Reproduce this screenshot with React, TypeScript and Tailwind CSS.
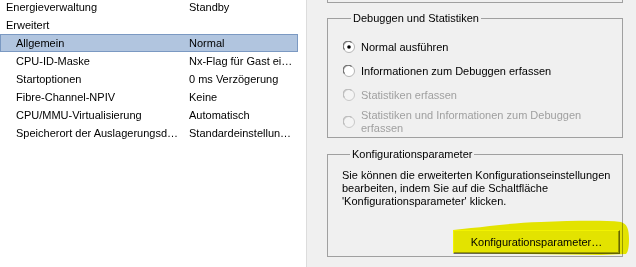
import React from "react";

type Row = { label: string; value: string; level: 1 | 2; selected?: boolean };

const rows: Row[] = [
  { label: "Energieverwaltung", value: "Standby", level: 1 },
  { label: "Erweitert", value: "", level: 1 },
  { label: "Allgemein", value: "Normal", level: 2, selected: true },
  { label: "CPU-ID-Maske", value: "Nx-Flag für Gast ei…", level: 2 },
  { label: "Startoptionen", value: "0 ms Verzögerung", level: 2 },
  { label: "Fibre-Channel-NPIV", value: "Keine", level: 2 },
  { label: "CPU/MMU-Virtualisierung", value: "Automatisch", level: 2 },
  { label: "Speicherort der Auslagerungsd…", value: "Standardeinstellun…", level: 2 },
];

const Radio = ({ checked, disabled }: { checked?: boolean; disabled?: boolean }) => (
  <svg width="12" height="12" viewBox="0 0 12 12" className="shrink-0">
    <circle cx="6" cy="6" r="5.5" fill={disabled ? "#f4f4f4" : "#ffffff"} stroke={disabled ? "#c8c8c8" : "#b4b4b4"} strokeWidth="1" />
    <path d="M1.6 8.6 A4.8 4.8 0 0 1 8.6 1.6" fill="none" stroke={disabled ? "#bcbcbc" : "#6e6e6e"} strokeWidth="1.1" />
    {checked && <circle cx="6" cy="6" r="1.8" fill="#000000" />}
  </svg>
);

const Option = ({ label, checked, disabled }: { label: React.ReactNode; checked?: boolean; disabled?: boolean }) => (
  <div className="flex items-center gap-[6px] h-[24px]">
    <Radio checked={checked} disabled={disabled} />
    <span className={disabled ? "text-[#a0a0a0]" : "text-black"}>{label}</span>
  </div>
);

export default function App() {
  return (
    <div
      className="w-[636px] h-[267px] overflow-hidden flex text-[11px] leading-[13px] text-black"
      style={{ fontFamily: '"Liberation Sans", Arial, sans-serif' }}
    >
      {/* property list */}
      <div className="w-[307px] shrink-0 bg-white border-r border-[#dcdcdc]">
        <div className="-mt-[2px] flex flex-col">
          {rows.map((r) => (
            <div
              key={r.label}
              className={
                "h-[18px] w-[298px] flex items-center border " +
                (r.selected ? "bg-[#b1c5df] border-[#7b99c2]" : "border-transparent")
              }
            >
              <span className={"w-[188px] whitespace-nowrap " + (r.level === 1 ? "pl-[5px]" : "pl-[15px]")}>{r.label}</span>
              <span className="whitespace-nowrap">{r.value}</span>
            </div>
          ))}
        </div>
      </div>

      {/* settings pane */}
      <div className="flex-1 bg-[#f0f0f0] pl-[20px] pr-[13px]">
        <div className="h-[3px] border-x border-b border-[#a0a0a0]" />

        <fieldset className="mt-[9px] h-[126px] border border-[#a0a0a0] px-[15px]">
          <legend className="ml-[8px] px-[2px]">Debuggen und Statistiken</legend>
          <div className="pt-[10px] flex flex-col">
            <Option label="Normal ausführen" checked />
            <Option label="Informationen zum Debuggen erfassen" />
            <Option label="Statistiken erfassen" disabled />
            <div className="flex items-center gap-[6px] mt-[2px]">
              <Radio disabled />
              <span className="text-[#a0a0a0]">
                Statistiken und Informationen zum Debuggen
                <br />
                erfassen
              </span>
            </div>
          </div>
        </fieldset>

        <fieldset className="mt-[10px] h-[109px] border border-[#a0a0a0] pl-[14px] pr-[2px]">
          <legend className="ml-[8px] px-[2px]">Konfigurationsparameter</legend>
          <p className="pt-[8px]">
            Sie können die erweiterten Konfigurationseinstellungen
            <br />
            bearbeiten, indem Sie auf die Schaltfläche
            <br />
            'Konfigurationsparameter' klicken.
          </p>
          <div className="mt-[22px] flex justify-end">
            <div className="relative">
              <button className="w-[167px] h-[24px] bg-[#f0f0f0] border-t border-l border-t-white border-l-white border-b border-r border-b-[#696969] border-r-[#696969] shadow-[inset_-1px_-1px_0_#a0a0a0]">
                Konfigurationsparameter…
              </button>
              <svg
                width="180"
                height="38"
                viewBox="0 0 180 38"
                className="absolute -left-[2px] -top-[11px] mix-blend-multiply pointer-events-none"
              >
                <path
                  d="M2 11 L20 9 C40 7 60 4 90 3 C120 2 150 1 170 3 C176 5 178 10 178 20 C178 28 177 33 175 35 L150 36 L2 34 Z"
                  fill="#f2f200"
                />
              </svg>
            </div>
          </div>
        </fieldset>
      </div>
    </div>
  );
}
